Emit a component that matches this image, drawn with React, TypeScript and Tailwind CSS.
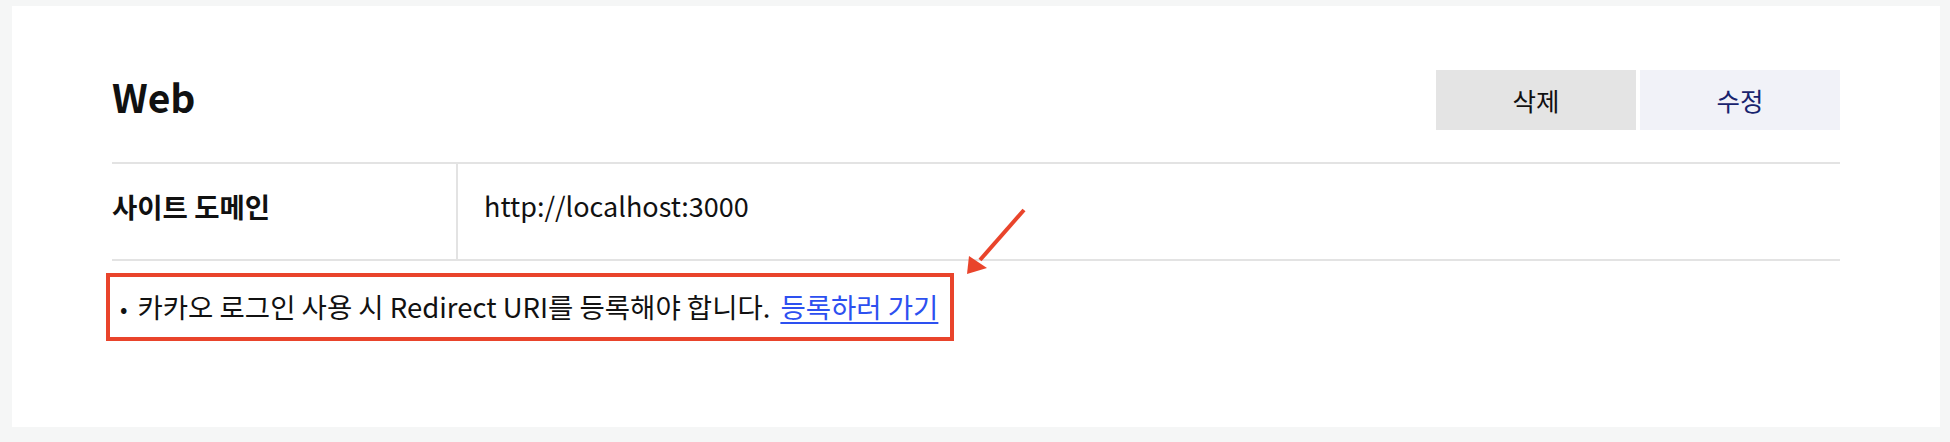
export default function App() {
  return (
    <div className="min-h-screen bg-[#f5f6f6] pl-[12px] pr-[10px] pt-[6px] pb-[12px] font-['Noto_Sans_CJK_KR',sans-serif] text-[#111]">
      <div className="bg-white px-[100px] pt-[64px] pb-[86px]">
        <div className="flex items-center justify-between h-[60px]">
          <h2 className="text-[39px] font-bold leading-none pb-[8px]">Web</h2>
          <div className="flex gap-[4px]">
            <button className="w-[200px] h-[60px] bg-[#e4e4e4] text-[25.5px] text-[#111]">삭제</button>
            <button className="w-[200px] h-[60px] bg-[#f1f2f8] text-[25.5px] text-[#18236e]">수정</button>
          </div>
        </div>

        <div className="mt-[32px] border-t-2 border-b-2 border-[#e3e3e3] flex h-[99px]">
          <div className="w-[346px] border-r-2 border-[#e3e3e3] flex items-center pb-[10px] text-[27.5px] font-bold">
            사이트 도메인
          </div>
          <div className="pl-[26px] flex items-center pb-[10px] text-[27px]">http://localhost:3000</div>
        </div>

        <div className="relative mt-[12px]">
          <div className="-ml-[6px] inline-flex items-center h-[68px] border-4 border-[#e9442b] pl-[10px] pr-[12px] text-[27.5px]">
            <span className="mr-[10px] text-[22px]">•</span>
            <span>카카오 로그인 사용 시 Redirect URI를 등록해야 합니다.</span>
            <a href="#" className="ml-[10px] text-[#2d50f0] underline underline-offset-[4px]">등록하러 가기</a>
          </div>

          <svg className="absolute left-[848px] -top-[69px]" width="70" height="75" viewBox="0 0 70 75">
            <line x1="64" y1="6" x2="20" y2="56" stroke="#e9442b" strokeWidth="4" />
            <polygon points="7,70 9,52 27,64" fill="#e9442b" />
          </svg>
        </div>
      </div>
    </div>
  );
}
